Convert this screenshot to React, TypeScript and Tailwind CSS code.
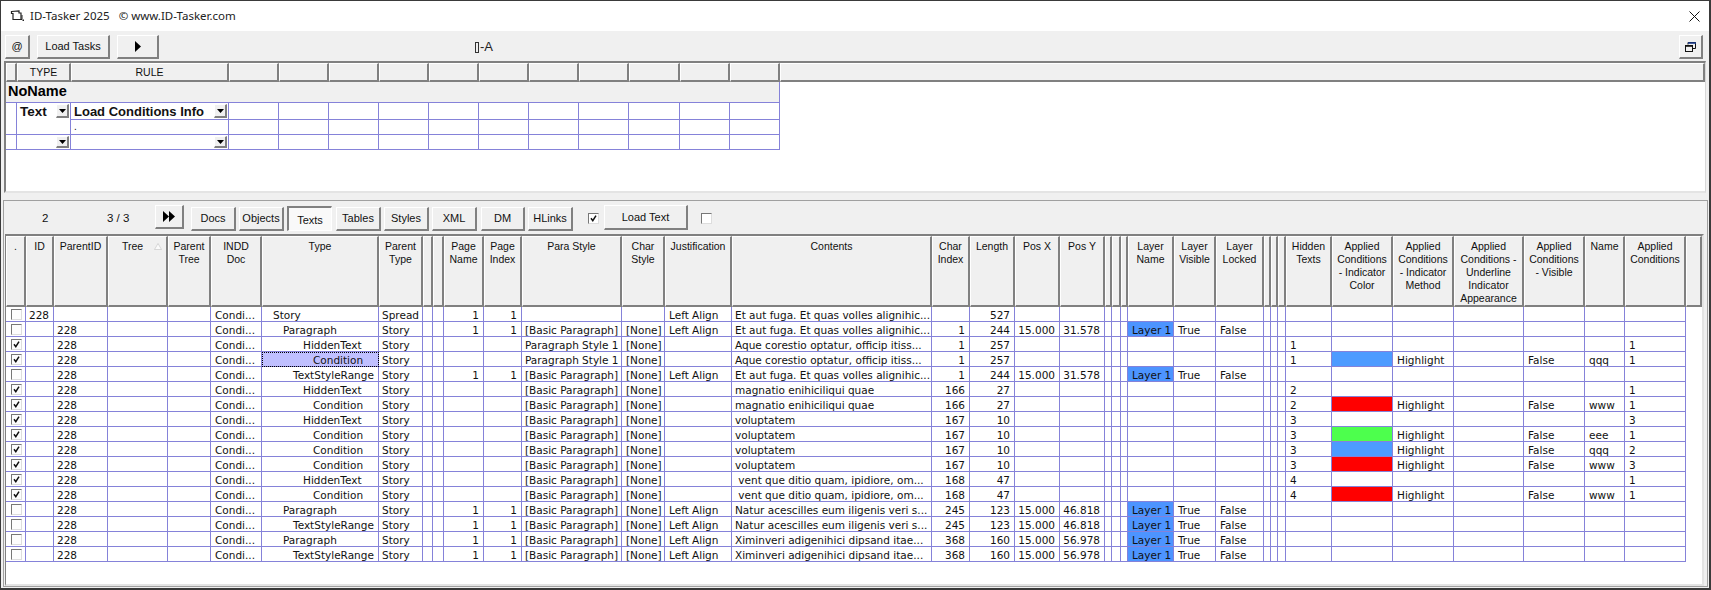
import React from "react";

const BTN = "flex shrink-0 items-center justify-center bg-[#f0f0f0] border-t border-l border-t-white border-l-white border-r-2 border-b-2 border-r-[#808080] border-b-[#808080] text-[11px] text-[#111] leading-none";
const HEAD = "bg-[#f0f0f0] border-t border-l border-t-white border-l-white border-r-2 border-b-2 border-r-[#808080] border-b-[#808080]";
const LINE = "border-[#8582d9]";
const ROWCOLS = "grid w-[1680px] h-[15px] grid-cols-[20px_28px_54px_60px_43px_51px_117px_44px_10px_11px_40px_38px_100px_43px_67px_200px_38px_45px_45px_45px_7px_9px_7px_46px_42px_48px_7px_7px_8px_46px_61px_61px_70px_61px_40px_61px]";
const HEADCOLS = "grid w-[1680px] h-[71px] grid-cols-[20px_28px_54px_60px_43px_51px_117px_44px_10px_11px_40px_38px_100px_43px_67px_200px_38px_45px_45px_45px_7px_9px_7px_46px_42px_48px_7px_7px_8px_46px_61px_61px_70px_61px_40px_61px]";
const TOPCOLS = "grid w-[774px] grid-cols-[11px_54px_158px_50px_50px_50px_50px_50px_50px_50px_50px_51px_50px_50px] grid-rows-[17px_15px_15px]";

const HEADERS = [".", "ID", "ParentID", "Tree", "Parent\nTree", "INDD\nDoc", "Type", "Parent\nType", "", "", "Page\nName", "Page\nIndex", "Para Style", "Char\nStyle", "Justification", "Contents", "Char\nIndex", "Length", "Pos X", "Pos Y", "", "", "", "Layer\nName", "Layer\nVisible", "Layer\nLocked", "", "", "", "Hidden\nTexts", "Applied\nConditions\n- Indicator\nColor", "Applied\nConditions\n- Indicator\nMethod", "Applied\nConditions -\nUnderline\nIndicator\nAppearance", "Applied\nConditions\n- Visible", "Name", "Applied\nConditions"];

type Row = {
  checked?: boolean; id?: string; parent?: string; type: string; indent: string; ptype?: string;
  page?: boolean; para?: string; just?: boolean; text: string; ci?: string; len: string; x?: string; y?: string;
  layer?: boolean; hidden?: string; color?: string; name?: string; ac?: string; selected?: boolean;
};

const L1 = "pl-[11px]", L2 = "pl-[21px]", L3 = "pl-[31px]", L4 = "pl-[41px]", L5 = "pl-[51px]";
const ET = "Et aut fuga. Et quas volles alignihic...";
const AQ = "Aque corestio optatur, officip itiss...";
const MA = "magnatio enihiciliqui quae";
const VO = "voluptatem";
const VE = " vent que ditio quam, ipidiore, om...";
const NA = "Natur acescilles eum iligenis veri s...";
const XI = "Ximinveri adigenihici dipsand itae...";
const BLUE = "bg-[#4d9bff]", RED = "bg-[#ff0000]", GREEN = "bg-[#4dff4d]";

const ROWS: Row[] = [
  { id: "228", type: "Story", indent: L1, ptype: "Spread", page: true, para: "", just: true, text: ET, len: "527" },
  { type: "Paragraph", indent: L2, page: true, just: true, text: ET, ci: "1", len: "244", x: "15.000", y: "31.578", layer: true },
  { checked: true, type: "HiddenText", indent: L4, para: "Paragraph Style 1", text: AQ, ci: "1", len: "257", hidden: "1", ac: "1" },
  { checked: true, type: "Condition", indent: L5, para: "Paragraph Style 1", text: AQ, ci: "1", len: "257", hidden: "1", color: BLUE, name: "qqq", ac: "1", selected: true },
  { type: "TextStyleRange", indent: L3, page: true, just: true, text: ET, ci: "1", len: "244", x: "15.000", y: "31.578", layer: true },
  { checked: true, type: "HiddenText", indent: L4, text: MA, ci: "166", len: "27", hidden: "2", ac: "1" },
  { checked: true, type: "Condition", indent: L5, text: MA, ci: "166", len: "27", hidden: "2", color: RED, name: "www", ac: "1" },
  { checked: true, type: "HiddenText", indent: L4, text: VO, ci: "167", len: "10", hidden: "3", ac: "3" },
  { checked: true, type: "Condition", indent: L5, text: VO, ci: "167", len: "10", hidden: "3", color: GREEN, name: "eee", ac: "1" },
  { checked: true, type: "Condition", indent: L5, text: VO, ci: "167", len: "10", hidden: "3", color: BLUE, name: "qqq", ac: "2" },
  { checked: true, type: "Condition", indent: L5, text: VO, ci: "167", len: "10", hidden: "3", color: RED, name: "www", ac: "3" },
  { checked: true, type: "HiddenText", indent: L4, text: VE, ci: "168", len: "47", hidden: "4", ac: "1" },
  { checked: true, type: "Condition", indent: L5, text: VE, ci: "168", len: "47", hidden: "4", color: RED, name: "www", ac: "1" },
  { type: "Paragraph", indent: L2, page: true, just: true, text: NA, ci: "245", len: "123", x: "15.000", y: "46.818", layer: true },
  { type: "TextStyleRange", indent: L3, page: true, just: true, text: NA, ci: "245", len: "123", x: "15.000", y: "46.818", layer: true },
  { type: "Paragraph", indent: L2, page: true, just: true, text: XI, ci: "368", len: "160", x: "15.000", y: "56.978", layer: true },
  { type: "TextStyleRange", indent: L3, page: true, just: true, text: XI, ci: "368", len: "160", x: "15.000", y: "56.978", layer: true },
];

function Check({ on, white }: { on?: boolean; white?: boolean }) {
  return (
    <span className={`flex h-[11px] w-[11px] shrink-0 items-center justify-center border border-t-[#777] border-l-[#777] border-r-[#ddd] border-b-[#ddd] ${white ? "bg-white" : "bg-[#fdfdfd]"}`}>
      {on && (
        <svg width="9" height="9" viewBox="0 0 9 9" fill="none">
          <path d="M2 4.2 L3.8 6.6 L7 1.6" stroke="#111" strokeWidth="1.5" />
        </svg>
      )}
    </span>
  );
}

function Drop({ small }: { small?: boolean }) {
  return (
    <span className={`${BTN} w-[13px] ${small ? "h-[12px]" : "h-[14px]"}`}>
      <svg width="7" height="4" viewBox="0 0 7 4"><path d="M0 0H7L3.5 4Z" fill="#000" /></svg>
    </span>
  );
}

function Cell({ className = "", children }: { className?: string; children?: React.ReactNode }) {
  return <div className={`overflow-hidden whitespace-pre border-r border-b ${LINE} leading-[16px] ${className}`}>{children}</div>;
}

function DataRow({ r }: { r: Row }) {
  const left = "pl-[4px]";
  const left3 = "pl-[3px]";
  const right = "pr-[4px] text-right";
  const layerBg = r.layer ? "bg-[#4d94ff]" : "";
  return (
    <div className={ROWCOLS}>
      <Cell className="pl-[5px] pt-[2px]"><Check on={r.checked} /></Cell>
      <Cell className={left3}>{r.id ?? ""}</Cell>
      <Cell className={left3}>{r.id ? "" : r.parent ?? "228"}</Cell>
      <Cell />
      <Cell />
      <Cell className={left}>Condi...</Cell>
      <Cell className={r.selected ? `${r.indent} bg-[#c0c0ff] outline-1 -outline-offset-1 outline-dotted outline-black` : r.indent}>{r.type}</Cell>
      <Cell className={left3}>{r.ptype ?? "Story"}</Cell>
      <Cell />
      <Cell />
      <Cell className={right}>{r.page ? "1" : ""}</Cell>
      <Cell className={right}>{r.page ? "1" : ""}</Cell>
      <Cell className={left3}>{r.para ?? "[Basic Paragraph]"}</Cell>
      <Cell className={left}>{r.para === "" ? "" : "[None]"}</Cell>
      <Cell className={left}>{r.just ? "Left Align" : ""}</Cell>
      <Cell className={left3}>{r.text}</Cell>
      <Cell className={right}>{r.ci ?? ""}</Cell>
      <Cell className={right}>{r.len}</Cell>
      <Cell className={right}>{r.x ?? ""}</Cell>
      <Cell className={right}>{r.y ?? ""}</Cell>
      <Cell />
      <Cell />
      <Cell />
      <Cell className={`${left} ${layerBg}`}>{r.layer ? "Layer 1" : ""}</Cell>
      <Cell className={left}>{r.layer ? "True" : ""}</Cell>
      <Cell className={left}>{r.layer ? "False" : ""}</Cell>
      <Cell />
      <Cell />
      <Cell />
      <Cell className={left}>{r.hidden ?? ""}</Cell>
      <Cell className={r.color ?? ""} />
      <Cell className={left}>{r.color ? "Highlight" : ""}</Cell>
      <Cell />
      <Cell className={left}>{r.color ? "False" : ""}</Cell>
      <Cell className={left}>{r.name ?? ""}</Cell>
      <Cell className={left}>{r.ac ?? ""}</Cell>
    </div>
  );
}

function TopBlank({ cls }: { cls: string }) {
  return <div className={`border-r ${LINE} ${cls}`} />;
}

export default function App() {
  const extra = Array.from({ length: 11 }, (_, i) => i);
  return (
    <div className="flex h-[590px] w-[1711px] flex-col overflow-hidden border-t border-l border-r-2 border-b-2 border-[#3a3a3a] bg-[#f0f0f0] font-['Liberation_Sans',sans-serif] text-[#111]">
      {/* title bar */}
      <div className="flex h-[30px] shrink-0 items-center bg-white text-[11.5px] font-['Noto_Sans',sans-serif] text-[#222]">
        <svg className="ml-[9px]" width="15" height="12" viewBox="0 0 15 12" fill="none">
          <path d="M1.5 1.5 L9 1 V3 H11 V9.5 H3 V3.5 H1.5 Z" stroke="#222" strokeWidth="1.2" />
          <path d="M3 9.5 H12 V5" stroke="#222" strokeWidth="1" />
          <rect x="12.5" y="9.5" width="1.5" height="1.5" fill="#222" />
        </svg>
        <span className="ml-[5px]">ID-Tasker 2025</span>
        <span className="ml-[9px]">© www.ID-Tasker.com</span>
        <svg className="ml-auto mr-[9px]" width="11" height="11" viewBox="0 0 11 11" fill="none">
          <path d="M0.5 0.5 L10.5 10.5 M10.5 0.5 L0.5 10.5" stroke="#111" strokeWidth="1" />
        </svg>
      </div>

      {/* main toolbar */}
      <div className="flex h-[30px] shrink-0 items-start pl-[4px] pt-[4px]">
        <div className={`${BTN} h-[24px] w-[25px]`}>@</div>
        <div className={`${BTN} ml-[7px] h-[24px] w-[73px]`}>Load Tasks</div>
        <div className={`${BTN} ml-[7px] h-[24px] w-[42px]`}>
          <svg width="6" height="11" viewBox="0 0 6 11"><path d="M0 0L6 5.5L0 11Z" fill="#000" /></svg>
        </div>
        <div className="ml-[316px] flex h-[24px] items-center text-[13px] text-[#222]">
          <span className="mr-[1px] inline-block h-[11px] w-[4px] border border-[#333]" />
          <span>-A</span>
        </div>
        <div className={`${BTN} ml-auto mr-[6px] h-[24px] w-[24px]`}>
          <svg width="11" height="10" viewBox="0 0 11 10" fill="none">
            <path d="M3 2.5V0.5H10.5V6.5H8" stroke="#111" />
            <path d="M3 1H11" stroke="#1a3a8a" strokeWidth="1.6" />
            <rect x="0.5" y="3.5" width="7" height="6" stroke="#111" />
            <path d="M0 4H8" stroke="#111" strokeWidth="1.6" />
          </svg>
        </div>
      </div>

      {/* top grid */}
      <div className="ml-[3px] mr-[3px] flex h-[132px] shrink-0 flex-col border-t-2 border-l-2 border-r border-b-2 border-t-[#808080] border-l-[#808080] border-r-[#d8d8d8] border-b-[#e4e4e4] bg-white">
        <div className="flex h-[19px] shrink-0 text-[10.5px] leading-[17px]">
          <div className={`${HEAD} w-[11px] shrink-0`} />
          <div className={`${HEAD} w-[54px] shrink-0 text-center`}>TYPE</div>
          <div className={`${HEAD} w-[158px] shrink-0 text-center`}>RULE</div>
          <div className={`${HEAD} w-[50px] shrink-0`} />
          <div className={`${HEAD} w-[50px] shrink-0`} />
          <div className={`${HEAD} w-[50px] shrink-0`} />
          <div className={`${HEAD} w-[50px] shrink-0`} />
          <div className={`${HEAD} w-[50px] shrink-0`} />
          <div className={`${HEAD} w-[50px] shrink-0`} />
          <div className={`${HEAD} w-[50px] shrink-0`} />
          <div className={`${HEAD} w-[50px] shrink-0`} />
          <div className={`${HEAD} w-[51px] shrink-0`} />
          <div className={`${HEAD} w-[50px] shrink-0`} />
          <div className={`${HEAD} w-[50px] shrink-0`} />
          <div className={`${HEAD} flex-1 border-r-0`} />
        </div>
        <div className={`h-[21px] w-[774px] shrink-0 border-r border-b ${LINE} bg-[#f0f0f0] pl-[2px] text-[14.5px] font-bold leading-[18px] text-black`}>NoName</div>
        <div className={`${TOPCOLS} shrink-0 text-[13px] font-bold text-[#111]`}>
          <div className={`col-start-1 row-start-1 row-span-2 border-r ${LINE}`} />
          <div className={`col-start-2 row-start-1 row-span-2 flex items-start justify-between border-r ${LINE} pl-[3px] pr-[1px] leading-[17px]`}>
            <span className="text-[13.5px]">Text</span>
            <span className="mt-[1px]"><Drop /></span>
          </div>
          <div className={`col-start-3 row-start-1 flex items-start justify-between border-r border-b ${LINE} pl-[3px] pr-[1px] leading-[17px]`}>
            <span>Load Conditions Info</span>
            <span className="mt-[1px]"><Drop /></span>
          </div>
          {extra.map((i) => <TopBlank key={`a${i}`} cls="row-start-1 border-b" />)}
          <div className={`col-start-3 row-start-2 border-r border-b ${LINE} pl-[3px] text-[10px] font-normal leading-[13px]`}>.</div>
          {extra.map((i) => <TopBlank key={`b${i}`} cls="row-start-2 border-b" />)}
          <div className={`col-start-1 row-start-3 border-t border-r border-b ${LINE} -mt-px`} />
          <div className={`col-start-2 row-start-3 flex items-center justify-end border-t border-r border-b ${LINE} -mt-px pr-[1px]`}><Drop small /></div>
          <div className={`col-start-3 row-start-3 flex items-center justify-end border-r border-b ${LINE} pr-[1px]`}><Drop small /></div>
          {extra.map((i) => <TopBlank key={`c${i}`} cls="row-start-3 border-b" />)}
        </div>
      </div>

      {/* lower panel */}
      <div className="ml-[2px] mr-[1px] mt-[7px] flex h-[387px] shrink-0 flex-col border border-[#a0a0a0] pl-[1px] pr-[3px]">
        <div className="flex h-[33px] shrink-0 items-start text-[11px] leading-[13px] text-[#111]">
          <span className="ml-[37px] mt-[11px] w-[8px] text-[11.5px]">2</span>
          <span className="ml-[57px] mt-[11px] w-[26px] whitespace-pre text-[11.5px]">3 / 3</span>
          <div className={`${BTN} ml-[22px] mt-[4px] h-[24px] w-[29px]`}>
            <svg width="12" height="11" viewBox="0 0 12 11"><path d="M0 0L6 5.5L0 11ZM6 0L12 5.5L6 11Z" fill="#000" /></svg>
          </div>
          <div className={`${BTN} ml-[7px] mt-[6px] h-[24px] w-[45px]`}>Docs</div>
          <div className={`${BTN} ml-[3px] mt-[6px] h-[24px] w-[45px]`}>Objects</div>
          <div className="ml-[3px] mt-[5px] flex h-[25px] w-[45px] shrink-0 items-center justify-center border-t-2 border-l-2 border-r border-b border-t-[#808080] border-l-[#808080] border-r-white border-b-white bg-[#f9f9f9] pt-[2px]">Texts</div>
          <div className={`${BTN} ml-[4px] mt-[6px] h-[24px] w-[45px]`}>Tables</div>
          <div className={`${BTN} ml-[3px] mt-[6px] h-[24px] w-[45px]`}>Styles</div>
          <div className={`${BTN} ml-[3px] mt-[6px] h-[24px] w-[45px]`}>XML</div>
          <div className={`${BTN} ml-[4px] mt-[6px] h-[24px] w-[44px]`}>DM</div>
          <div className={`${BTN} ml-[3px] mt-[6px] h-[24px] w-[45px]`}>HLinks</div>
          <span className="ml-[15px] mt-[12px]"><Check on white /></span>
          <div className={`${BTN} ml-[5px] mt-[4px] h-[25px] w-[84px]`}>Load Text</div>
          <span className="ml-[13px] mt-[12px]"><Check white /></span>
        </div>
        <div className="flex min-h-0 flex-1 flex-col border-t-2 border-l border-r-2 border-b-2 border-t-[#808080] border-l-[#808080] border-r-[#e4e4e4] border-b-[#e4e4e4] bg-white font-['DejaVu_Sans',sans-serif] text-[10.5px]">
          <div className="flex h-[71px] shrink-0 font-['Liberation_Sans',sans-serif]">
            <div className={HEADCOLS}>
              {HEADERS.map((h, i) =>
                h === "Tree" ? (
                  <div key={i} className={`${HEAD} flex items-start pl-[13px] pt-[3px] leading-[13px]`}>
                    <span>Tree</span>
                    <svg className="ml-[11px] mt-[3px]" width="8" height="7" viewBox="0 0 8 7"><path d="M4 0.5L7.5 6.5H0.5Z" fill="#fbfbfb" stroke="#c8c8c8" strokeWidth="0.7" /></svg>
                  </div>
                ) : (
                  <div key={i} className={`${HEAD} overflow-hidden whitespace-pre-line pt-[3px] text-center leading-[13px]`}>{h}</div>
                )
              )}
            </div>
            <div className={`${HEAD} flex-1 border-r-0`} />
          </div>
          {ROWS.map((r, i) => <DataRow key={i} r={r} />)}
        </div>
      </div>
    </div>
  );
}
